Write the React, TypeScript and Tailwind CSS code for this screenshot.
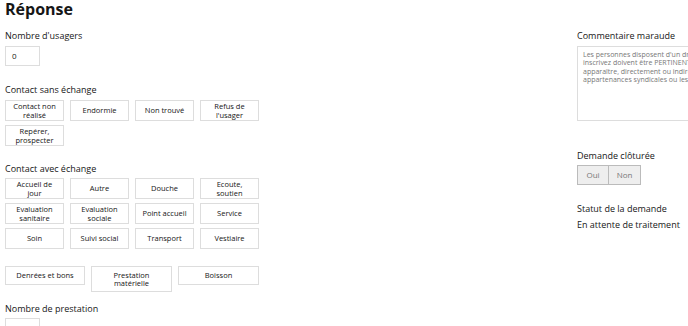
import React from "react";

const Btn = ({ label, className = "" }: { label: React.ReactNode; className?: string }) => (
  <div
    className={`flex items-center justify-center text-center border border-[#dddddd] bg-white text-[7.5px] leading-[8.5px] text-[#161616] ${className}`}
  >
    {label}
  </div>
);

const Label = ({ children, className = "" }: { children: React.ReactNode; className?: string }) => (
  <div className={`text-[9px] leading-[12px] text-[#161616] whitespace-nowrap ${className}`}>{children}</div>
);

export default function App() {
  const sans = [
    ["Contact non", "réalisé"],
    ["Endormie"],
    ["Non trouvé"],
    ["Refus de", "l'usager"],
    ["Repérer,", "prospecter"],
  ];
  const avec = [
    ["Accueil de", "jour"],
    ["Autre"],
    ["Douche"],
    ["Ecoute,", "soutien"],
    ["Evaluation", "sanitaire"],
    ["Evaluation", "sociale"],
    ["Point accueil"],
    ["Service"],
    ["Soin"],
    ["Suivi social"],
    ["Transport"],
    ["Vestiaire"],
  ];
  const render = (l: string[]) => (
    <span>
      {l.map((s, i) => (
        <React.Fragment key={i}>
          {i > 0 && <br />}
          {s}
        </React.Fragment>
      ))}
    </span>
  );
  return (
    <div
      className="w-[688px] h-[326px] overflow-hidden bg-white text-[#161616]"
      style={{ fontFamily: '"Open Sans", "Liberation Sans", sans-serif' }}
    >
      <div className="grid grid-cols-[572px_200px] px-[5px]">
        {/* Left column */}
        <div className="flex flex-col">
          <h1 className="text-[16px] leading-[18px] font-bold">Réponse</h1>
          <Label className="mt-[12px]">Nombre d'usagers</Label>
          <div className="mt-[4px] w-[35px] h-[20px] border border-[#dddddd] text-[8px] leading-[18px] pl-[6px]">0</div>
          <Label className="mt-[18px]">Contact sans échange</Label>
          <div className="mt-[4px] grid grid-cols-[59px_59px_59px_59px] gap-x-[6px] gap-y-[4px]">
            {sans.map((l, i) => (
              <Btn key={i} label={render(l)} className="h-[21px]" />
            ))}
          </div>
          <Label className="mt-[17px]">Contact avec échange</Label>
          <div className="mt-[3px] grid grid-cols-[59px_59px_59px_59px] gap-x-[6px] gap-y-[4px]">
            {avec.map((l, i) => (
              <Btn key={i} label={render(l)} className="h-[21px]" />
            ))}
          </div>
          <div className="mt-[17px] flex items-start gap-[6px]">
            <Btn label="Denrées et bons" className="w-[80px] h-[19px]" />
            <Btn label={render(["Prestation", "matérielle"])} className="w-[81px] h-[26px]" />
            <Btn label="Boisson" className="w-[81px] h-[19px]" />
          </div>
          <Label className="mt-[11px]">Nombre de prestation</Label>
          <div className="mt-[3px] w-[35px] h-[20px] border border-[#dddddd] text-[8px] leading-[18px] pl-[6px]">0</div>
        </div>
        {/* Right column */}
        <div className="flex flex-col">
          <div className="h-[18px]" />
          <Label className="mt-[12px]">Commentaire maraude</Label>
          <div className="mt-[4px] w-[160px] h-[75px] border border-[#dddddd] pl-[5px] pt-[4px] text-[7px] leading-[8.3px] text-[#777777] whitespace-nowrap overflow-hidden">
            <div>Les personnes disposent d'un droit d'accès aux informations les concernant.</div>
            <div>inscrivez doivent être PERTINENTES au regard de la finalité poursuivie.</div>
            <div>apparaître, directement ou indirectement, les origines raciales ou ethniques,</div>
            <div>appartenances syndicales ou les mœurs de la personne concernée.</div>
          </div>
          <Label className="mt-[29px]">Demande clôturée</Label>
          <div className="mt-[3px] flex">
            <div className="w-[32px] h-[20px] border border-[#bbbbbb] bg-[#eeeeee] text-[8px] leading-[18px] text-center text-[#777777]">Oui</div>
            <div className="w-[32px] h-[20px] border border-l-0 border-[#bbbbbb] bg-[#eeeeee] text-[8px] leading-[18px] text-center text-[#777777]">Non</div>
          </div>
          <Label className="mt-[18px]">Statut de la demande</Label>
          <Label className="mt-[4px]">En attente de traitement</Label>
        </div>
      </div>
    </div>
  );
}
